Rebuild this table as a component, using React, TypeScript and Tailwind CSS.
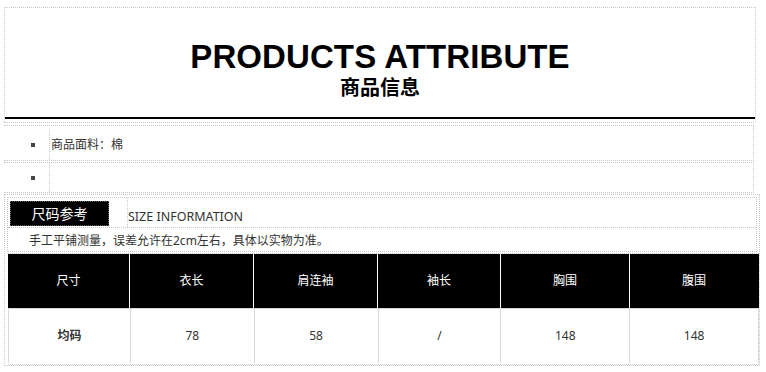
import React from 'react';

const font = "font-['Liberation_Sans','Noto_Sans_CJK_SC',sans-serif]";
const cjk = "font-['Noto_Sans','Noto_Sans_CJK_SC',sans-serif]";

const heads = ['尺寸', '衣长', '肩连袖', '袖长', '胸围', '腹围'];
const values = ['均码', '78', '58', '/', '148', '148'];
const widths = ['w-[121px]', 'w-[124px]', 'w-[124px]', 'w-[123px]', 'w-[129px]', 'w-[129px]'];

const App: React.FC = () => {
  return (
    <div className={`w-[766px] h-[372px] bg-white pt-[7px] pl-[4px] ${cjk}`}>
      {/* title box */}
      <div className="w-[752px] h-[115px] border border-dotted border-[#c8c8c8] border-b-0 flex flex-col items-center">
        <h1 className={`${font} mt-[31px] text-[33px] leading-[36px] font-bold text-black tracking-[0.1px]`}>
          PRODUCTS ATTRIBUTE
        </h1>
        <h2 className={`${cjk} mt-[1px] text-[20px] leading-[24px] font-bold text-black`}>商品信息</h2>
        <div className="mt-auto mb-[3px] w-full h-[2px] bg-black" />
      </div>

      {/* attribute rows */}
      <div className="w-[750px] border-t border-dotted border-[#c8c8c8] pt-[2px]">
        {['商品面料：棉', ''].map((txt, i) => (
          <div
            key={i}
            className={`flex border-y border-r border-dotted border-[#c8c8c8] ${i === 0 ? 'h-[36px] pt-[3px]' : 'h-[31px] mt-[1px]'}`}
          >
            <div className="w-[46px] border-r border-dotted border-[#c8c8c8] flex items-center">
              <span className="ml-[27px] w-[4px] h-[4px] bg-[#444]" />
            </div>
            <div className="flex items-center pl-[1px] text-[12px] text-[#333]">{txt}</div>
          </div>
        ))}
      </div>

      {/* size information */}
      <div className="mt-[1px] w-[756px] h-[172px] border border-dotted border-[#c8c8c8] p-[2px]">
        <div className="w-[750px] border border-dotted border-[#c8c8c8]">
          <div className="flex h-[30px] items-end border-b border-dotted border-[#c8c8c8]">
            <div className="ml-[2px] mb-[1px] w-[99px] h-[25px] bg-black border border-dotted border-[#666] flex items-center justify-center text-[14px] text-white">
              尺码参考
            </div>
            <div className="ml-[18px] h-full border-l border-dotted border-[#c8c8c8] flex items-center pt-[10px] text-[12.5px] text-[#333]">
              SIZE INFORMATION
            </div>
          </div>
          <div className="h-[23px] flex items-center pl-[21px] pt-[3px] text-[12px] text-[#333]">
            手工平铺测量，误差允许在2cm左右，具体以实物为准。
          </div>
        </div>
        <div className="mt-[1px] ml-[1px] w-[751px] border-t border-b border-dotted border-[#c8c8c8] pb-[1px]">
          <div className="flex h-[54px] bg-black">
            {heads.map((h, i) => (
              <div
                key={h}
                className={`${widths[i]} flex items-center justify-center text-[12px] text-white ${i > 0 ? 'border-l border-white' : ''}`}
              >
                {h}
              </div>
            ))}
          </div>
          <div className="flex h-[55px] border-t border-x border-[#d9d9d9]">
            {values.map((v, i) => (
              <div
                key={i}
                className={`${widths[i]} flex items-center justify-center text-[12px] text-[#333] ${i === 0 ? 'font-bold' : ''} ${i > 0 ? 'border-l border-[#d9d9d9]' : ''}`}
              >
                {v}
              </div>
            ))}
          </div>
        </div>
      </div>
    </div>
  );
};

export default App;
